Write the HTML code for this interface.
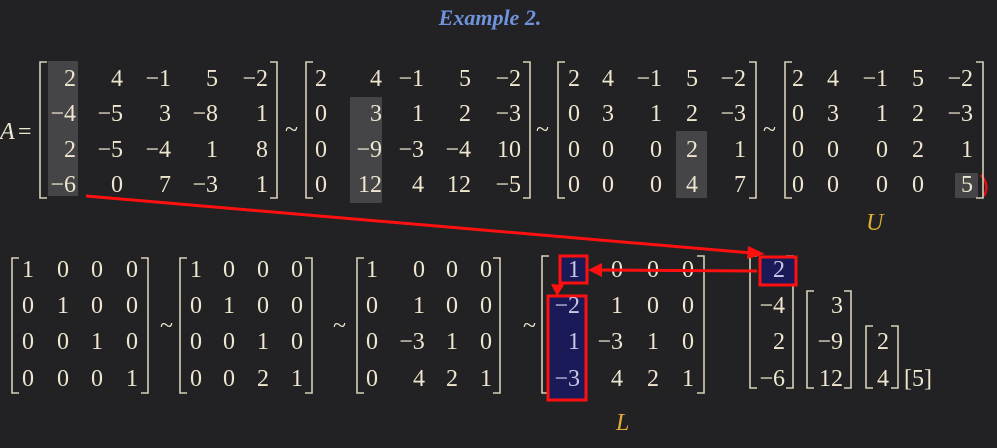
<!DOCTYPE html>
<html><head><style>
html,body{margin:0;padding:0;background:#222123;}
svg{display:block}
svg text{font-family:"Liberation Serif","Times New Roman","DejaVu Serif",serif !important;font-size:24px;fill:#efe6cf}
</style></head><body>
<svg width="997" height="448" viewBox="0 0 997 448" xmlns="http://www.w3.org/2000/svg" font-family="Liberation Serif, serif">
<rect width="997" height="448" fill="#222123"/>
<text x="490" y="25" text-anchor="middle" style="font-style:italic;font-weight:bold;font-size:22px;fill:#6f93dc">Example 2.</text>

<rect x="48" y="61" width="30" height="135" fill="#454547"/>
<rect x="350" y="97" width="32" height="106" fill="#454547"/>
<rect x="676" y="131" width="31" height="67" fill="#454547"/>
<rect x="955" y="173" width="23" height="25" fill="#454547"/>
<path d="M981 175 Q990 185 984 196" stroke="#e01010" stroke-width="2.5" fill="none"/>

<g fill="none" stroke="#d8cfb8" stroke-width="1.6">
<path d="M47 62 H40 V198 H47"/><path d="M270 62 H277 V198 H270"/>
<path d="M313 62 H306 V198 H313"/><path d="M523 62 H530 V198 H523"/>
<path d="M565 62 H558 V198 H565"/><path d="M749 62 H756 V198 H749"/>
<path d="M792 62 H785 V198 H792"/><path d="M976 62 H983 V198 H976"/>
<path d="M19 258 H12 V393 H19"/><path d="M141 258 H148 V393 H141"/>
<path d="M187 258 H180 V393 H187"/><path d="M305 258 H312 V393 H305"/>
<path d="M364 258 H357 V393 H364"/><path d="M493 258 H500 V393 H493"/>
<path d="M549 256 H542 V393 H549"/><path d="M697 256 H704 V393 H697"/>
<path d="M757 256 H750 V388 H757"/><path d="M786 256 H793 V388 H786"/>
<path d="M814 291 H807 V388 H814"/><path d="M844 291 H851 V388 H844"/>
<path d="M873 326 H866 V388 H873"/><path d="M891 326 H898 V388 H891"/>
</g>

<text x="0" y="139" style="font-style:italic">A</text><text x="18" y="139">=</text>
<text x="285" y="137">~</text><text x="536" y="137">~</text><text x="763" y="137">~</text>

<g text-anchor="end">
<text x="76" y="86">2</text><text x="123" y="86">4</text><text x="171" y="86">−1</text><text x="218" y="86">5</text><text x="268" y="86">−2</text>
<text x="76" y="121">−4</text><text x="123" y="121">−5</text><text x="171" y="121">3</text><text x="218" y="121">−8</text><text x="268" y="121">1</text>
<text x="76" y="157">2</text><text x="123" y="157">−5</text><text x="171" y="157">−4</text><text x="218" y="157">1</text><text x="268" y="157">8</text>
<text x="76" y="192">−6</text><text x="123" y="192">0</text><text x="171" y="192">7</text><text x="218" y="192">−3</text><text x="268" y="192">1</text>
<text x="327" y="86">2</text><text x="382" y="86">4</text><text x="424" y="86">−1</text><text x="471" y="86">5</text><text x="521" y="86">−2</text>
<text x="327" y="121">0</text><text x="382" y="121">3</text><text x="424" y="121">1</text><text x="471" y="121">2</text><text x="521" y="121">−3</text>
<text x="327" y="157">0</text><text x="382" y="157">−9</text><text x="424" y="157">−3</text><text x="471" y="157">−4</text><text x="521" y="157">10</text>
<text x="327" y="192">0</text><text x="382" y="192">12</text><text x="424" y="192">4</text><text x="471" y="192">12</text><text x="521" y="192">−5</text>
<text x="580" y="86">2</text><text x="614" y="86">4</text><text x="662" y="86">−1</text><text x="698" y="86">5</text><text x="746" y="86">−2</text>
<text x="580" y="121">0</text><text x="614" y="121">3</text><text x="662" y="121">1</text><text x="698" y="121">2</text><text x="746" y="121">−3</text>
<text x="580" y="157">0</text><text x="614" y="157">0</text><text x="662" y="157">0</text><text x="698" y="157">2</text><text x="746" y="157">1</text>
<text x="580" y="192">0</text><text x="614" y="192">0</text><text x="662" y="192">0</text><text x="698" y="192">4</text><text x="746" y="192">7</text>
<text x="804" y="86">2</text><text x="839" y="86">4</text><text x="888" y="86">−1</text><text x="924" y="86">5</text><text x="973" y="86">−2</text>
<text x="804" y="121">0</text><text x="839" y="121">3</text><text x="888" y="121">1</text><text x="924" y="121">2</text><text x="973" y="121">−3</text>
<text x="804" y="157">0</text><text x="839" y="157">0</text><text x="888" y="157">0</text><text x="924" y="157">2</text><text x="973" y="157">1</text>
<text x="804" y="192">0</text><text x="839" y="192">0</text><text x="888" y="192">0</text><text x="924" y="192">0</text><text x="973" y="192">5</text>
</g>
<text x="866" y="230" style="font-style:italic;fill:#e0ad35">U</text>

<text x="160" y="333">~</text><text x="333" y="333">~</text><text x="523" y="333">~</text>

<rect x="548" y="296" width="38" height="104" fill="#1a1a58" stroke="#ff1010" stroke-width="3"/>
<rect x="560" y="256" width="27" height="27" fill="#1a1a58" stroke="#ff1010" stroke-width="3"/>
<rect x="760" y="257" width="36" height="28" fill="#1a1a58" stroke="#ff1010" stroke-width="3"/>

<g text-anchor="middle">
<text x="28" y="277">1</text><text x="63" y="277">0</text><text x="97" y="277">0</text><text x="132" y="277">0</text>
<text x="28" y="313">0</text><text x="63" y="313">1</text><text x="97" y="313">0</text><text x="132" y="313">0</text>
<text x="28" y="349">0</text><text x="63" y="349">0</text><text x="97" y="349">1</text><text x="132" y="349">0</text>
<text x="28" y="386">0</text><text x="63" y="386">0</text><text x="97" y="386">0</text><text x="132" y="386">1</text>
<text x="196" y="277">1</text><text x="229" y="277">0</text><text x="263" y="277">0</text><text x="297" y="277">0</text>
<text x="196" y="313">0</text><text x="229" y="313">1</text><text x="263" y="313">0</text><text x="297" y="313">0</text>
<text x="196" y="349">0</text><text x="229" y="349">0</text><text x="263" y="349">1</text><text x="297" y="349">0</text>
<text x="196" y="386">0</text><text x="229" y="386">0</text><text x="263" y="386">2</text><text x="297" y="386">1</text>
<text x="372" y="277">1</text><text x="419" y="277">0</text><text x="452" y="277">0</text><text x="486" y="277">0</text>
<text x="372" y="313">0</text><text x="419" y="313">1</text><text x="452" y="313">0</text><text x="486" y="313">0</text>
<text x="372" y="349">0</text><text x="412" y="349">−3</text><text x="452" y="349">1</text><text x="486" y="349">0</text>
<text x="372" y="386">0</text><text x="419" y="386">4</text><text x="452" y="386">2</text><text x="486" y="386">1</text>
</g>
<g text-anchor="end">
<text x="580" y="277" style="fill:#c8c8e8">1</text><text x="623" y="277">0</text><text x="659" y="277">0</text><text x="694" y="277">0</text>
<text x="580" y="313" style="fill:#c8c8e8">−2</text><text x="623" y="313">1</text><text x="659" y="313">0</text><text x="694" y="313">0</text>
<text x="580" y="349" style="fill:#c8c8e8">1</text><text x="623" y="349">−3</text><text x="659" y="349">1</text><text x="694" y="349">0</text>
<text x="580" y="386" style="fill:#c8c8e8">−3</text><text x="623" y="386">4</text><text x="659" y="386">2</text><text x="694" y="386">1</text>
<text x="785" y="277" style="fill:#c8c8e8">2</text>
<text x="785" y="313">−4</text><text x="785" y="349">2</text><text x="785" y="386">−6</text>
<text x="843" y="313">3</text><text x="843" y="349">−9</text><text x="843" y="386">12</text>
<text x="889" y="349">2</text><text x="889" y="386">4</text>
</g>
<text x="904" y="386">[5]</text>
<text x="616" y="430" style="font-style:italic;fill:#e0ad35">L</text>

<g stroke="#ff1010" stroke-width="3" fill="#ff1010">
<line x1="86" y1="196" x2="752" y2="253"/>
<line x1="757" y1="271" x2="598" y2="270"/>
<line x1="562" y1="283" x2="559" y2="288"/>
</g>
<g fill="#ff1010">
<polygon points="765,254 748,246 747,259"/>
<polygon points="588,270 602,263 602,277"/>
<polygon points="557,296 551,284 564,285"/>
</g>
</svg>
</body></html>
